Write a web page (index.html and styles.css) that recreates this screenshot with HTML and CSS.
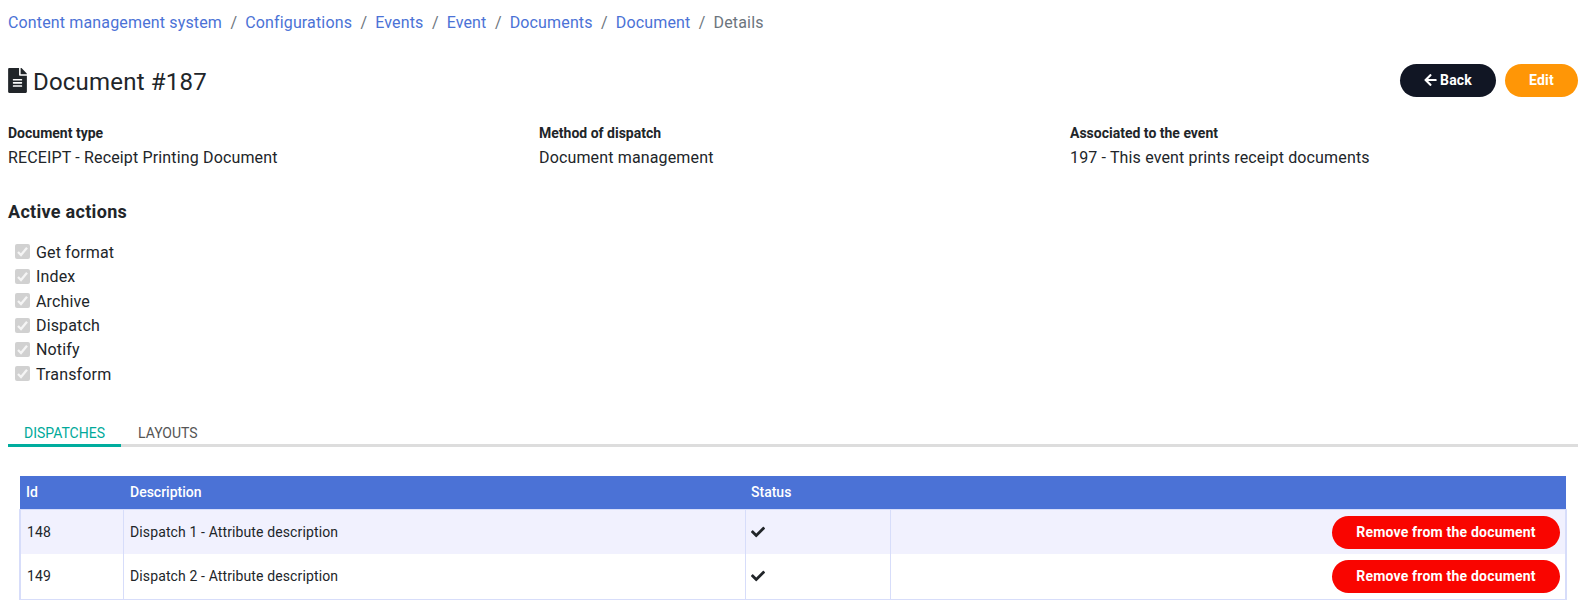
FILE: index.html
```html
<!DOCTYPE html>
<html lang="en">
<head>
<meta charset="utf-8">
<title>Document #187</title>
<link rel="stylesheet" href="styles.css">
</head>
<body>
<nav class="breadcrumb">
<a href="#">Content management system</a><a href="#">Configurations</a><a href="#">Events</a><a href="#">Event</a><a href="#">Documents</a><a href="#">Document</a><span>Details</span>
</nav>
<header class="heading">
<h1><svg class="file-icon" viewBox="0 0 384 512"><path fill="currentColor" d="M224 136V0H24C10.700 0 0 10.700 0 24v464c0 13.300 10.700 24 24 24h336c13.300 0 24-10.700 24-24V160H248c-13.200 0-24-10.800-24-24zm64 236c0 6.600-5.400 12-12 12H108c-6.600 0-12-5.400-12-12v-8c0-6.600 5.400-12 12-12h168c6.600 0 12 5.400 12 12v8zm0-64c0 6.600-5.400 12-12 12H108c-6.600 0-12-5.400-12-12v-8c0-6.600 5.400-12 12-12h168c6.600 0 12 5.400 12 12v8zm0-72v8c0 6.600-5.400 12-12 12H108c-6.600 0-12-5.400-12-12v-8c0-6.600 5.400-12 12-12h168c6.600 0 12 5.400 12 12zm96-114.100v6.100H256V0h6.100c6.400 0 12.500 2.500 17 7l97.900 98c4.500 4.500 7 10.600 7 16.900z"/></svg><span>Document #187</span></h1>
<div class="actions">
<button class="btn back"><svg class="arrow-icon" viewBox="0 0 448 512"><path fill="currentColor" d="M257.500 445.100l-22.200 22.200c-9.400 9.400-24.600 9.400-33.900 0L7 273c-9.400-9.400-9.400-24.600 0-33.900L201.400 44.700c9.400-9.400 24.600-9.400 33.900 0l22.200 22.200c9.500 9.500 9.300 25-.4 34.300L136.600 216H424c13.300 0 24 10.700 24 24v32c0 13.300-10.700 24-24 24H136.600l120.500 114.800c9.800 9.300 10 24.800.4 34.300z"/></svg>Back</button>
<button class="btn edit">Edit</button>
</div>
</header>
<dl class="details">
<div><dt>Document type</dt><dd>RECEIPT - Receipt Printing Document</dd></div>
<div><dt>Method of dispatch</dt><dd>Document management</dd></div>
<div><dt>Associated to the event</dt><dd>197 - This event prints receipt documents</dd></div>
</dl>
<h2>Active actions</h2>
<ul class="checks">
<li><svg class="box" viewBox="0 0 15 15"><rect width="15" height="15" rx="2"/><path d="M3 8l3 3 6-7.300"/></svg>Get format</li>
<li><svg class="box" viewBox="0 0 15 15"><rect width="15" height="15" rx="2"/><path d="M3 8l3 3 6-7.300"/></svg>Index</li>
<li><svg class="box" viewBox="0 0 15 15"><rect width="15" height="15" rx="2"/><path d="M3 8l3 3 6-7.300"/></svg>Archive</li>
<li><svg class="box" viewBox="0 0 15 15"><rect width="15" height="15" rx="2"/><path d="M3 8l3 3 6-7.300"/></svg>Dispatch</li>
<li><svg class="box" viewBox="0 0 15 15"><rect width="15" height="15" rx="2"/><path d="M3 8l3 3 6-7.300"/></svg>Notify</li>
<li><svg class="box" viewBox="0 0 15 15"><rect width="15" height="15" rx="2"/><path d="M3 8l3 3 6-7.300"/></svg>Transform</li>
</ul>
<div class="tabs"><a class="tab active">DISPATCHES</a><a class="tab">LAYOUTS</a></div>
<div class="table">
<div class="row head"><div>Id</div><div>Description</div><div>Status</div><div></div></div>
<div class="body">
<div class="row odd"><div>148</div><div>Dispatch 1 - Attribute description</div><div><svg class="check-icon" viewBox="0 0 512 512"><path fill="currentColor" d="M173.900 439.400l-166.400-166.400c-10-10-10-26.200 0-36.200l36.200-36.200c10-10 26.200-10 36.200 0L192 312.700 432.100 72.600c10-10 26.200-10 36.200 0l36.200 36.200c10 10 10 26.200 0 36.200l-294.400 294.400c-10 10-26.200 10-36.200 0z"/></svg></div><div class="end"><button class="btn remove">Remove from the document</button></div></div>
<div class="row"><div>149</div><div>Dispatch 2 - Attribute description</div><div><svg class="check-icon" viewBox="0 0 512 512"><path fill="currentColor" d="M173.900 439.400l-166.400-166.400c-10-10-10-26.200 0-36.200l36.200-36.200c10-10 26.200-10 36.200 0L192 312.700 432.100 72.600c10-10 26.200-10 36.200 0l36.200 36.200c10 10 10 26.200 0 36.200l-294.400 294.400c-10 10-26.200 10-36.200 0z"/></svg></div><div class="end"><button class="btn remove">Remove from the document</button></div></div>
</div>
</div>
</body>
</html>
```
FILE: styles.css
```css
* { box-sizing: border-box; }
body { margin: 0; padding: 11px 6px 0 8px; background: #fff; color: #212529; font: 16px/24px Roboto, sans-serif; letter-spacing: .15px; overflow: hidden; }
h1, h2, dl, dd, ul { margin: 0; padding: 0; font-weight: 400; }
.breadcrumb { display: flex; height: 24px; color: #6c757d; }
.breadcrumb a { color: #4b72d6; text-decoration: none; }
.breadcrumb a::after { content: "/"; color: #6c757d; padding: 0 8px 0 8.400px; }
.heading { display: flex; justify-content: space-between; align-items: flex-start; margin-top: 29px; height: 58px; }
h1 { display: flex; align-items: center; gap: 6px; height: 33px; font-size: 24px; line-height: 32px; letter-spacing: .2px; }
h1 span { padding-top: 2px; }
.file-icon { width: 19px; height: 25px; }
.actions { display: flex; gap: 9px; }
.btn { display: flex; align-items: center; justify-content: center; height: 33px; padding: 0 0 1px; border: 0; border-radius: 17px; color: #fff; font: 700 14px/20px Roboto, sans-serif; letter-spacing: .2px; }
.back { width: 96px; background: #111624; gap: 3px; }
.edit { width: 73px; background: #ff9606; }
.arrow-icon { width: 13px; height: 14px; }
.details { display: grid; grid-template-columns: 531px 531px 1fr; height: 77px; }
dt { font-size: 14px; font-weight: 700; line-height: 22px; letter-spacing: 0; }
dd { margin-top: 2px; }
h2 { font-size: 18px; font-weight: 700; line-height: 26px; letter-spacing: .3px; }
.checks { list-style: none; padding: 15.700px 0 0 7px; height: 195px; }
.checks li { display: flex; align-items: center; gap: 6px; height: 24.4px; }
.box { width: 15px; height: 15px; margin-bottom: 2px; }
.box rect { fill: #d1d1d1; }
.box path { fill: none; stroke: #f5f5f5; stroke-width: 2.3; }
.tabs { display: flex; height: 27px; border-bottom: 3px solid #ddd; font-size: 14px; color: #555; letter-spacing: 0; }
.tab { height: 27px; padding: 0 17px; line-height: 27px; }
.tab.active { width: 113px; padding-right: 0; padding-left: 16px; color: #00a99a; border-bottom: 3px solid #00ad9e; }
.table { margin: 29px 11px 0; font-size: 14px; letter-spacing: .12px; }
.row { display: grid; grid-template-columns: 102px 622px 145px 1fr; }
.row > div { display: flex; align-items: center; padding: 0 6px; }
.head { grid-template-columns: 104px 621px 145px 1fr; height: 33px; margin: 0 1px; padding-bottom: 1px; color: #fff; background: #4b72d6; font-weight: 500; letter-spacing: 0; }
.body { border: 1px solid #d7ddfa; border-width: 1px 2px; }
.body .row { height: 44px; }
.body .row:last-child { height: 45px; }
.body .row:last-child > div { padding-bottom: 1px; }
.body .row > div + div { border-left: 1px solid #d7ddfa; }
.odd { background: #f1f1fe; }
.body .row > div.end { justify-content: flex-end; padding-right: 5px; }
.remove { width: 228px; background: #f90500; padding-bottom: 0; }
.check-icon { width: 14px; height: 14px; margin-left: -1px; }
```
